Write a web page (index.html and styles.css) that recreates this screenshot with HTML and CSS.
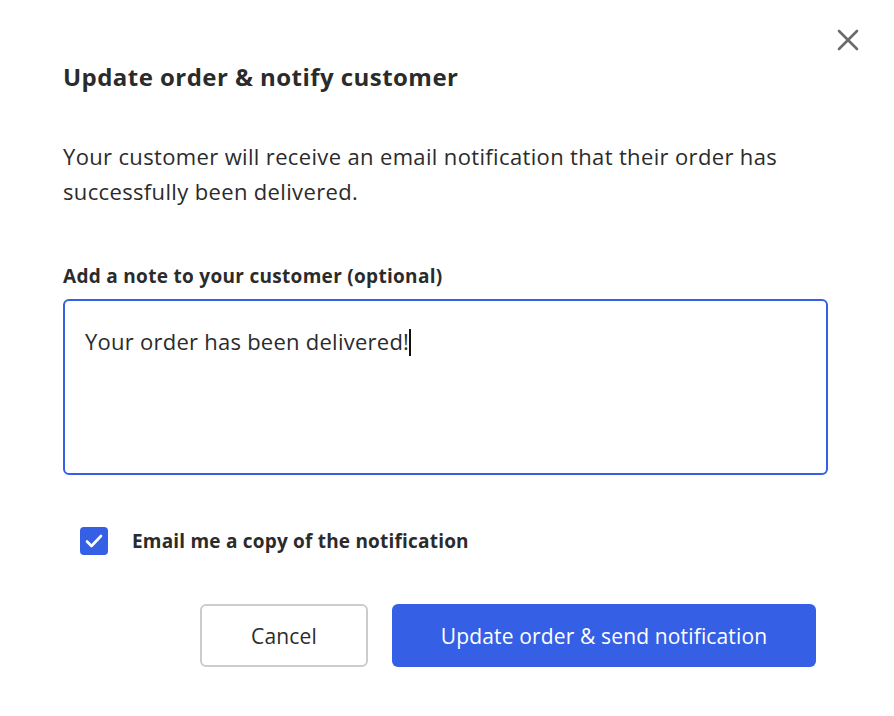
FILE: index.html
```html
<!DOCTYPE html>
<html lang="en">
  <head>
    <meta charset="UTF-8" />
    <title>Update order</title>
    <link rel="stylesheet" href="styles.css">
  </head>
  <body>
    <div class="modal">
      <button class="close-button" aria-label="Close">
        <svg width="22" height="22" viewBox="0 0 22 22">
          <path d="M2 2 L20 20 M20 2 L2 20" stroke="#6b6b6b" stroke-width="2.6" stroke-linecap="round" />
        </svg>
      </button>
      <h1>Update order &amp; notify customer</h1>
      <p class="description">
        Your customer will receive an email notification that their order has
        successfully been delivered.
      </p>

      <label class="note-label" for="note">Add a note to your customer (optional)</label>
      <div class="note-box">
        <span class="note-text">Your order has been delivered!</span><span class="caret"></span>
      </div>

      <label class="copy-row">
        <span class="checkbox">
          <svg width="18" height="14" viewBox="0 0 18 14">
            <path d="M2 7.5 L6.5 12 L16 2" stroke="#fff" stroke-width="2.6" fill="none" stroke-linecap="round" stroke-linejoin="round" />
          </svg>
        </span>
        Email me a copy of the notification
      </label>

      <div class="actions">
        <button class="cancel-button">Cancel</button>
        <button class="primary-button">Update order &amp; send notification</button>
      </div>
    </div>
  </body>
</html>
```

FILE: styles.css
```css
:root {
  --primary-color: #3560e6;
  --text-color: #2b2b2b;
  --border-color: #cccccc;
  --icon-color: #6b6b6b;
}
body {
  margin: 0;
  background-color: #ffffff;
  font-family: "Open Sans", "Noto Sans", sans-serif;
  color: var(--text-color);
}
.modal {
  position: relative;
  padding: 60px 66px 0 63px;
}
.close-button {
  position: absolute;
  top: 29px;
  right: 35px;
  background: none;
  border: none;
  padding: 0;
  cursor: pointer;
}
h1 {
  margin: 0;
  font-size: 24px;
  font-weight: 700;
  letter-spacing: 0.45px;
  line-height: 34px;
}
.description {
  margin: 45px 0 0;
  font-size: 22px;
  letter-spacing: 0.35px;
  line-height: 35px;
}
.note-label {
  display: block;
  margin-top: 54px;
  font-size: 19px;
  font-weight: 700;
  letter-spacing: 0.3px;
  line-height: 26px;
}
.note-box {
  margin-top: 10px;
  height: 176px;
  border: 2px solid var(--primary-color);
  border-radius: 6px;
  padding: 24px 20px;
  box-sizing: border-box;
  font-size: 22px;
  letter-spacing: 0.25px;
  line-height: 32px;
}
.caret {
  display: inline-block;
  width: 2px;
  height: 27px;
  background: #111;
  vertical-align: -6px;
}
.copy-row {
  display: flex;
  align-items: center;
  gap: 24px;
  margin: 52px 0 0 17px;
  font-size: 19px;
  font-weight: 700;
  letter-spacing: 0.2px;
}
.checkbox {
  width: 28px;
  height: 28px;
  border-radius: 4px;
  background-color: var(--primary-color);
  display: flex;
  align-items: center;
  justify-content: center;
}
.actions {
  display: flex;
  justify-content: flex-end;
  gap: 24px;
  margin-top: 49px;
  padding-right: 12px;
}
.actions button {
  font-family: inherit;
  font-size: 21px;
  letter-spacing: 0.15px;
  height: 63px;
  border-radius: 6px;
  cursor: pointer;
}
.cancel-button {
  width: 168px;
  background: #ffffff;
  border: 2px solid var(--border-color);
  color: var(--text-color);
}
.primary-button {
  width: 424px;
  background-color: var(--primary-color);
  border: none;
  color: #ffffff;
}
```
